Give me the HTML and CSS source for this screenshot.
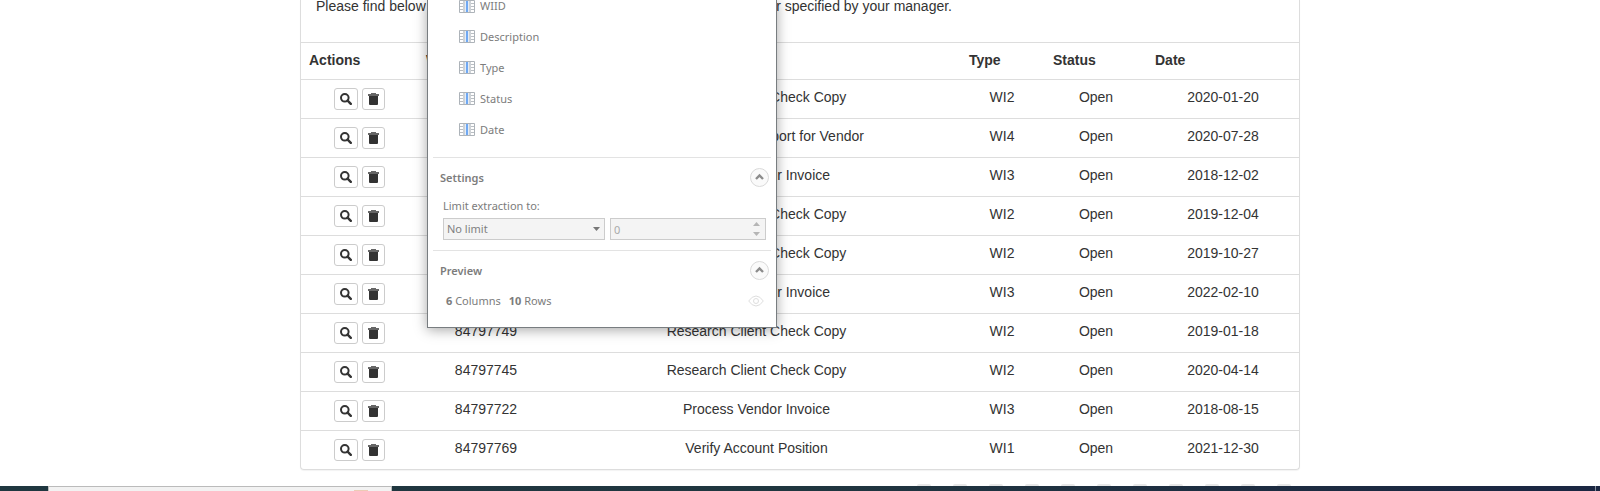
FILE: index.html
```html
<!DOCTYPE html>
<html lang="en">
<head>
<meta charset="utf-8">
<title>Work Items</title>
<link rel="stylesheet" href="styles.css">
</head>
<body>
<svg class="defs" aria-hidden="true">
  <symbol id="search" viewBox="0 0 12 12"><circle cx="4.800" cy="4.800" r="3.800" fill="none" stroke="currentColor" stroke-width="2"/><path d="M7.600 7.600 10.800 10.800" stroke="currentColor" stroke-width="2.400" stroke-linecap="round"/></symbol>
  <symbol id="trash" viewBox="0 0 11 12"><path d="M3 0h5v1h3v2H0V1h3z" fill="#666"/><path d="M1 3h9v8q0 1-1 1H2q-1 0-1-1z" fill="currentColor"/></symbol>
  <symbol id="column" viewBox="0 0 16 13"><path d="M.5.500h15v12H.5z" fill="#fff" stroke="#adb3b9"/><path d="M1 3.500h4M1 6.500h4M1 9.500h4M11 3.500h4M11 6.500h4M11 9.500h4" stroke="#b9bec3"/><path d="M5 1v11M11 1v11" stroke="#ced2d6" stroke-width="2"/><path d="M6 1h4v11H6z" fill="#e3edf8"/><path d="M7 1h2v11H7z" fill="#6fa8f2"/></symbol>
  <symbol id="chevron" viewBox="0 0 19 19"><circle cx="9.500" cy="9.500" r="9" fill="#fafafa" stroke="#d9d9d9"/><path d="M6 11 9.500 7.500l3.500 3.500" fill="none" stroke="#8c8c8c" stroke-width="2.400"/></symbol>
</svg>
<main class="page">
  <section class="panel">
    <p class="intro"><span>Please find below</span><span>or specified by your manager.</span></p>
    <table class="items">
      <colgroup><col class="c-actions"><col class="c-id"><col><col class="c-type"><col class="c-status"><col class="c-date"></colgroup>
      <thead><tr><th>Actions</th><th>WIID</th><th>Description</th><th>Type</th><th>Status</th><th>Date</th></tr></thead>
      <tbody id="rows"></tbody>
    </table>
    <aside class="popup">
      <ul class="fields">
        <li><svg class="col-icon"><use href="#column"/></svg>WIID</li>
        <li><svg class="col-icon"><use href="#column"/></svg>Description</li>
        <li><svg class="col-icon"><use href="#column"/></svg>Type</li>
        <li><svg class="col-icon"><use href="#column"/></svg>Status</li>
        <li><svg class="col-icon"><use href="#column"/></svg>Date</li>
      </ul>
      <section class="group settings">
        <header class="group-head"><h2>Settings</h2><button class="toggle" aria-label="Collapse settings"><svg><use href="#chevron"/></svg></button></header>
        <label class="limit-label" for="limit">Limit extraction to:</label>
        <div class="limit">
          <span class="select-box"><select id="limit"><option>No limit</option></select><svg class="arrow" viewBox="0 0 7 4"><path d="M0 0h7L3.500 4z" fill="#777"/></svg></span>
          <span class="spin-box"><input type="text" value="0" aria-label="Row limit" disabled><svg class="spin" viewBox="0 0 7 14"><path d="M0 4h7L3.500 0zM0 10h7l-3.500 4z" fill="#b5b5b5"/></svg></span>
        </div>
      </section>
      <section class="group">
        <header class="group-head"><h2>Preview</h2><button class="toggle" aria-label="Collapse preview"><svg><use href="#chevron"/></svg></button></header>
        <div class="summary"><span><b>6</b> Columns</span><span><b>10</b> Rows</span>
          <svg class="eye" viewBox="0 0 16 12"><path d="M.7 6Q4 1 8 1t7.300 5Q12 11 8 11T.7 6z" fill="none" stroke="#dedede"/><circle cx="8" cy="6" r="2.500" fill="none" stroke="#dedede"/></svg>
        </div>
      </section>
    </aside>
  </section>
</main>
<div class="dots"><i></i><i></i><i></i><i></i><i></i><i></i><i></i><i></i><i></i><i></i><i></i></div>
<footer class="band"><div class="card"><i class="flame"></i></div><i class="edge"></i></footer>
<script src="rows.js"></script>
</body>
</html>
```
FILE: styles.css
```css
* { box-sizing: border-box; }
body { margin: 0; background: #fff; color: #333; font: 14px/20px "Liberation Sans", Arial, sans-serif; overflow: hidden; }
.defs { position: absolute; width: 0; height: 0; }
.page { padding: 0 16px; }
.panel { position: relative; max-width: 1000px; margin: 0 auto; border: 1px solid #ddd; border-top: 0; border-radius: 0 0 4px 4px; box-shadow: 0 1px 1px rgba(0,0,0,.05); }
.intro { display: flex; justify-content: space-between; max-width: 651px; height: 42px; margin: 0; padding: 0 0 0 15px; line-height: 12px; }
.items { width: 100%; table-layout: fixed; border-collapse: separate; border-spacing: 0; }
.items th, .items td { padding: 7px 8px 0; border-top: 1px solid #ddd; vertical-align: top; }
.items th { height: 37px; text-align: left; }
.items td { height: 39px; text-align: center; }
.items td:nth-child(3), .items td:nth-child(4) { padding-right: 10px; }
.c-actions { width: 117px; }
.c-id { width: 136px; }
.c-type { width: 84px; }
.c-status { width: 102px; }
.c-date { width: 152px; }
.actions { display: flex; justify-content: center; gap: 4px; padding: 1px 1px 0 0; }
.btn { display: flex; align-items: center; justify-content: center; width: 24px; height: 22px; padding: 0; border: 1px solid #ccc; border-radius: 3px; background: #fff; color: #333; }
.btn + .btn { width: 23px; }
.btn svg { width: 12px; height: 12px; }
.btn + .btn svg { width: 11px; }
.popup { position: absolute; top: 0; left: 126px; width: 350px; height: 328px; padding: 0 5px; border: 1px solid #787d80; border-top: 0; background: #fff; box-shadow: 0 2px 12px rgba(0,0,0,.35); color: #7c7c7c; font: 11px/16px "Noto Sans", sans-serif; }
.fields { height: 157px; margin: 0; padding: 0 0 0 26px; list-style: none; }
.fields li { display: flex; align-items: center; gap: 5px; height: 31px; }
.fields li:first-child { height: 16px; margin-bottom: 5px; line-height: 11px; align-items: flex-start; }
.col-icon { width: 16px; height: 13px; }
.group { padding: 9px 2px 0 7px; border-top: 1px solid #e3e3e3; }
.settings { height: 93px; }
.group-head { display: flex; justify-content: space-between; align-items: center; height: 21px; }
.group-head h2 { margin: 0; font-size: 11px; font-weight: 600; }
.toggle { width: 19px; height: 19px; padding: 0; border: 0; background: none; }
.toggle svg { display: block; width: 19px; height: 19px; }
.limit-label { display: block; height: 20px; margin-top: 10px; padding-left: 3px; }
.limit { display: flex; gap: 5px; padding: 0 3px; }
.select-box, .spin-box { position: relative; display: block; height: 22px; }
.select-box { width: 162px; }
.spin-box { flex: 1; }
.limit select, .limit input { display: block; width: 100%; height: 22px; padding: 0 3px; border: 1px solid #ccc; border-radius: 0; background: #f4f4f4; color: #808080; font: inherit; appearance: none; }
.limit input { color: #aaa; }
.arrow { position: absolute; top: 9px; right: 5px; width: 7px; height: 4px; }
.spin { position: absolute; top: 4px; right: 6px; width: 7px; height: 14px; }
.summary { display: flex; align-items: center; gap: 8px; height: 20px; margin-top: 10px; padding: 0 5px 0 6px; }
.eye { width: 16px; height: 12px; margin-left: auto; }
.dots { display: flex; justify-content: flex-end; gap: 22px; height: 2px; margin-top: 14px; padding-right: 309px; }
.dots i { width: 14px; height: 2px; border-radius: 7px 7px 0 0; background: #e8e8e8; }
.band { display: flex; justify-content: space-between; height: 5px; padding: 0 4px 0 48px; background: linear-gradient(90deg, #1f3740, #20363f 50%, #1b2742 95%); }
.card { width: 344px; padding: 3px 23px 0 0; border: 1px solid #bbb; border-bottom: 0; background: #f2f2f2; }
.flame { display: block; width: 14px; height: 1px; margin-left: auto; background: #eccbb5; }
.edge { width: 1px; background: #8a93a0; }
```
FILE: rows.js
```js
const rows = [
  ["", "Research Client Check Copy", "WI2", "2020-01-20"],
  ["", "Generate Yearly Report for Vendor", "WI4", "2020-07-28"],
  ["", "Process Vendor Invoice", "WI3", "2018-12-02"],
  ["", "Research Client Check Copy", "WI2", "2019-12-04"],
  ["", "Research Client Check Copy", "WI2", "2019-10-27"],
  ["", "Process Vendor Invoice", "WI3", "2022-02-10"],
  ["84797749", "Research Client Check Copy", "WI2", "2019-01-18"],
  ["84797745", "Research Client Check Copy", "WI2", "2020-04-14"],
  ["84797722", "Process Vendor Invoice", "WI3", "2018-08-15"],
  ["84797769", "Verify Account Position", "WI1", "2021-12-30"]
];
document.getElementById("rows").innerHTML = rows.map(([id, text, type, date]) => `
  <tr><td><div class="actions">
    <button class="btn" aria-label="View"><svg><use href="#search"/></svg></button>
    <button class="btn" aria-label="Delete"><svg><use href="#trash"/></svg></button>
  </div></td><td>${id}</td><td>${text}</td><td>${type}</td><td>Open</td><td>${date}</td></tr>`).join("");
```
